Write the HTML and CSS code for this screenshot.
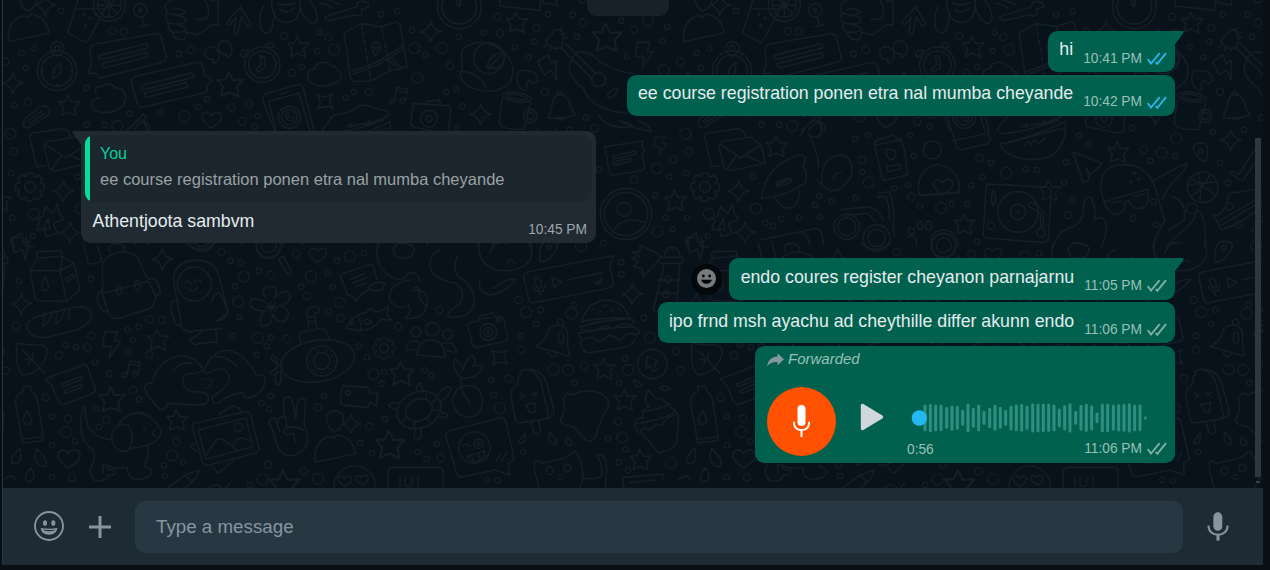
FILE: index.html
```html
<!DOCTYPE html>
<html lang="en">
<head>
<meta charset="utf-8">
<title>Chat</title>
<link rel="stylesheet" href="styles.css">
</head>
<body>
<svg class="defs" width="0" height="0">
  <defs>
    <symbol id="tail" viewBox="0 0 9 14"><path d="M0 0H7.2Q9.4 .3 8.2 2.2L0 13.2z" fill="currentColor"/></symbol>
    <symbol id="ticks" viewBox="0 0 60 38"><path d="M2 21l10 13L38 3M26 30l5 5L57 3" fill="none" stroke="currentColor" stroke-width="5.6"/></symbol>
    <symbol id="mic" viewBox="0 0 64 88"><rect x="18" y="1" width="27" height="56" rx="13.5" fill="currentColor"/><path d="M3 41C3 58 15 69 32 69s29-11 29-28" fill="none" stroke="currentColor" stroke-width="6"/><path d="M32 69v18" stroke="currentColor" stroke-width="9"/></symbol>
    <path id="star" d="M-5-32L6-11 31-12 15 6 20 30-3 19-24 29-19 5-33-12-13-12z"/>
    <path id="spark" d="M1-32Q5-5 32-1 6 5-1 32-5 5-32 0-5-5 1-32z"/>
    <path id="heart" d="M-4 26C-20 12-34 0-29-13-22-26-6-21-2-11 5-24 25-25 28-10 30 7 12 17-4 26z"/>
    <path id="bolt" d="M-20-38H18L10-10H28L-6 40 0 6H-26z"/>
    <path id="gear" d="M-9-42H9L13-29 25-36 38-23 31-11 43-8V9L30 13 36 26 23 38 11 31 8 42H-9L-13 30-26 36-38 23-31 11-43 8V-9L-30-13-36-25-23-38-12-31z"/>
    <g id="note"><path d="M-14 20L-6-22 26-18 18 16M-7-12L24-8"/><circle cx="-21" cy="20" r="7"/><circle cx="11" cy="17" r="7"/></g>
    <g id="person"><path d="M-60 50Q-65-5-28-24-10-32-2-22 5-38 18-30 55-20 61 24L-60 50zM-26-86Q-20-105 0-105 28-102 26-75 15-45-3-42-25-52-26-86z"/></g>
    <g id="bottle"><path d="M-38-62Q-34-86-15-90V-106H8L12-90Q26-80 30-58L45 42Q48 57 36 58L-16 64zM-16 52L42 46"/><path d="M-2-32Q-22-5-9 6 10 12 12-8z"/></g>
    <path id="ringS" d="M183 32h.1M65 159h.1M103 145h.1M78 203h.1M260 264h.1M42 315h.1M388 341h.1M480 338h.1M260 374h.1M313 374h.1M33 520h.1M37 654h.1M98 708h.1M536 161h.1M596 321h.1M773 348h.1M765 380h.1M621 297h.1M906 201h.1M952 153h.1M958 97h.1M1038 294h.1M1062 275h.1M1143 43h.1M1192 34h.1M1235 91h.1
      M1644 43h.1M1718 44h.1M1864 62h.1M1450 97h.1M1376 111h.1M1731 110h.1M1602 126h.1M1544 142h.1M1585 172h.1M1275 165h.1M1338 275h.1M1369 267h.1M1387 319h.1M1370 384h.1M1758 353h.1M1880 169h.1M1988 123h.1M2002 80h.1M1798 509h.1M2008 530h.1M1966 586h.1M1996 653h.1M2017 687h.1M1810 729h.1
      M541 416h.1M578 405h.1M705 406h.1M717 467h.1M561 515h.1M698 555h.1M658 565h.1M542 593h.1M735 618h.1M830 611h.1M877 611h.1M906 725h.1M922 531h.1M889 556h.1M948 488h.1M1053 507h.1M1085 510h.1M1173 487h.1M1167 547h.1M1239 433h.1M1212 407h.1M1193 600h.1M1426 482h.1M1501 467h.1M1635 488h.1M1660 548h.1M1435 605h.1M1443 674h.1M1613 397h.1M1708 389h.1M1757 658h.1
      M233 530h.1M271 669h.1M319 656h.1M373 654h.1M436 651h.1M295 679h.1M433 589h.1M420 615h.1M470 604h.1"/>
    <path id="ringT" transform="translate(0 720)" d="M57 123h.1M273 116h.1M383 270h.1M416 261h.1M399 301h.1M383 337h.1M196 315h.1M228 322h.1M286 367h.1M328 401h.1M417 479h.1M288 507h.1M297 561h.1M155 529h.1M156 616h.1M155 712h.1M225 604h.1M492 676h.1M550 666h.1M495 708h.1M697 287h.1M705 138h.1M718 232h.1M776 92h.1M722 69h.1M692 62h.1M800 319h.1M769 344h.1M813 293h.1M812 469h.1M785 490h.1M808 507h.1M972 469h.1M903 140h.1M983 99h.1M1012 62h.1M1092 40h.1M985 213h.1M998 142h.1M1077 319h.1M1101 352h.1M1152 396h.1M1145 431h.1M1155 537h.1M1080 608h.1M1115 640h.1M750 735h.1
      M1864 67h.1M1865 103h.1M1722 194h.1M1622 209h.1M1608 252h.1M1562 287h.1M1931 233h.1M1474 420h.1M1273 391h.1M1294 407h.1M1481 464h.1M1723 429h.1M1857 429h.1M1874 356h.1M1824 595h.1M1878 628h.1M1856 667h.1M1883 691h.1M1569 637h.1M1253 636h.1M1279 657h.1M1310 613h.1M1462 720h.1M1493 721h.1M1810 9h.1"/>
    <path id="ringM" d="M338 93h.1M371 95h.1M572 149h.1M852 108h.1M875 219h.1M747 312h.1M694 322h.1M727 364h.1M1107 276h.1M85 305h.1M41 455h.1M16 185h.1M985 111h.1M1748 68h.1M1492 51h.1M1609 83h.1M1500 100h.1M1349 197h.1M1635 275h.1M1901 89h.1M1784 385h.1M1903 539h.1M2020 478h.1
      M561 480h.1M709 590h.1M913 475h.1M1180 645h.1M1406 450h.1M948 677h.1M1663 619h.1M1691 673h.1M1745 690h.1
      M48 978h.1M17 1112h.1M137 1192h.1M399 1170h.1M319 1259h.1M204 1256h.1M216 1432h.1M177 1066h.1M274 1008h.1M261 1042h.1M448 1064h.1M664 756h.1M889 762h.1M812 825h.1M1195 980h.1M1022 955h.1M921 888h.1M860 1017h.1M530 1325h.1M804 1394h.1M911 1414h.1M1108 1280h.1M954 1223h.1M447 958h.1M485 960h.1
      M1556 900h.1M1318 931h.1M1526 1136h.1M1564 1049h.1M1753 1098h.1M1854 1264h.1M1322 1374h.1M2028 1053h.1"/>
    <path id="ringL" d="M553 350h.1M352 378h.1M1002 149h.1M31 401h.1M101 642h.1M1243 145h.1M1252 232h.1M1326 144h.1M1991 210h.1M2057 401h.1M1970 505h.1M1972 694h.1M1944 62h.1M581 547h.1M798 624h.1M994 519h.1M1460 459h.1M1504 416h.1M1550 625h.1M242 626h.1
      M731 830h.1M715 904h.1M933 830h.1M773 1014h.1M198 1296h.1M517 1367h.1M954 1437h.1M788 1438h.1M1120 1123h.1M1018 908h.1M1049 770h.1M1743 738h.1M1714 941h.1M1661 1108h.1M1884 1110h.1M1499 1225h.1M1578 937h.1M1950 1013h.1M1704 1110h.1M1867 1312h.1M2013 1389h.1"/>
    <g id="doodles">
      <g class="ring-out"><use href="#ringS" stroke-width="20"/><use href="#ringT" stroke-width="20"/><use href="#ringM" stroke-width="26"/><use href="#ringL" stroke-width="37"/></g>
      <g class="ring-in"><use href="#ringS" stroke-width="12"/><use href="#ringT" stroke-width="12"/><use href="#ringM" stroke-width="18"/><use href="#ringL" stroke-width="29"/></g>
      <g class="line">
        <!-- stars -->
        <use href="#star" x="896" y="141"/><use href="#star" x="209" y="317"/><use href="#star" transform="translate(692 254) scale(1.2)"/><use href="#star" x="1552" y="68"/><use href="#star" transform="translate(1823 113) scale(1.35)"/><use href="#star" x="2028" y="603"/><use href="#star" x="307" y="440"/><use href="#star" x="1331" y="457"/><use href="#star" x="1125" y="572"/><use href="#star" x="870" y="673"/><use href="#star" x="476" y="1020"/><use href="#star" transform="translate(337 1199) scale(1.2)"/><use href="#star" x="533" y="1261"/><use href="#star" transform="translate(1207 1121) scale(1.15)"/><use href="#star" transform="translate(1172 1335) scale(1.35)"/><use href="#star" x="1815" y="1107"/><use href="#star" x="1877" y="1200"/><use href="#star" x="1924" y="1380"/><use href="#star" transform="translate(855 1455) scale(1.4)"/>
        <!-- sparkles -->
        <use href="#spark" x="38" y="250"/><use href="#spark" x="190" y="573"/><use href="#spark" x="210" y="698"/><use href="#spark" transform="translate(975 305) rotate(42)"/><use href="#spark" x="1292" y="95"/><use href="#spark" x="1442" y="343"/><use href="#spark" x="1667" y="421"/><use href="#spark" x="487" y="778"/><use href="#spark" x="64" y="912"/><use href="#spark" x="1897" y="883"/><use href="#spark" transform="translate(1499 1072) rotate(42)"/><use href="#spark" transform="translate(1053 1272) scale(.9)"/><use href="#spark" transform="translate(135 15)"/>
        <!-- hearts, bolts, gears, notes -->
        <use href="#heart" x="636" y="358"/><use href="#heart" transform="translate(954 764) scale(.9)"/><use href="#heart" transform="translate(208 1374) scale(1.15)"/><use href="#heart" x="805" y="560"/><use href="#heart" transform="translate(619 1150) scale(.65)"/>
        <use href="#bolt" transform="translate(1651 205) rotate(-35)"/><use href="#bolt" x="1932" y="165"/><use href="#bolt" transform="translate(1980 438) scale(.7)"/><use href="#bolt" x="334" y="1033"/><use href="#bolt" transform="translate(65 742) rotate(-25)"/>
        <use href="#gear" x="90" y="561"/><circle cx="90" cy="561" r="16"/><use href="#gear" transform="translate(1152 1045) scale(.75)"/><circle cx="1152" cy="1045" r="13"/>
        <use href="#note" x="1197" y="285"/><use href="#note" x="395" y="1105"/>
        <!-- people, drink, fist -->
        <use href="#person" x="86" y="75"/><use href="#person" x="1005" y="1337"/>
        <path d="M235-5L203 98 254 127Q262 128 266 120L331-5M228 27H316"/><circle cx="328" cy="16" r="48"/><circle cx="328" cy="16" r="36"/><path d="M328-18V50M294 16H362M304-8L352 40M352-8L304 40"/><circle cx="251" cy="43" r="3"/><circle cx="270" cy="54" r="3"/><circle cx="257" cy="77" r="3"/><circle cx="288" cy="43" r="3"/>
        <circle cx="421" cy="31" r="20"/><circle cx="421" cy="31" r="5"/><path d="M426 51L434 78M418 81L448 74"/>
        <path d="M515 0Q485 12 502 38 492 58 506 69 499 88 516 96 521 118 545 120 562 116 557 96L590 105Q620 90 629 77L655 74V5L632 0M502 38Q540 52 556 36 540 20 515 30M506 69Q540 76 558 66 557 50 536 47M516 96Q550 100 558 88 550 75 530 73M587 58Q615 60 625 48 628 20 615 0"/>
        <path d="M681 66L721 20 752 70Q750 82 740 77L724 50 714 98Q706 110 702 98L708 52 692 72Q682 78 681 66z"/>
        <path d="M790 20Q775 40 782 85 798 110 814 90L825 40M815 0Q815 70 865 67 905 60 900 0M900 20Q910 60 938 71 960 65 945 25L930 0M838 28Q860 45 884 24M832 10Q858 20 885 8"/>
        <path d="M975 50L1070 20Q1070-4 1100 8 1118 20 1085 28 1090 55 1065 45L990 61Q975 63 975 50zM960 10Q980 10 1000 25M985 0L1025 15"/>
        <!-- compass, speech bubbles, quotes, clock -->
        <circle cx="171" cy="212" r="59"/><circle cx="171" cy="212" r="47"/><circle cx="172" cy="145" r="20"/><circle cx="172" cy="145" r="8"/><path d="M184 188L180 220 158 237 162 205zM171 172V165M211 212H218M171 252V258M130 212H124"/>
        <path d="M285 132L465 101Q481 100 485 115L499 170Q500 183 488 186L300 235 287 220 264 220 275 190 270 150Q272 135 285 132z"/><rect x="295" y="148" width="150" height="14" rx="7" transform="rotate(-14 370 155)"/><rect x="305" y="174" width="140" height="14" rx="7" transform="rotate(-14 375 181)"/>
        <path d="M410 228L592 187Q602 186 607 198L615 226 636 243 621 254 622 268Q622 276 612 278L430 322Q418 324 413 312L394 250Q392 234 410 228z"/><rect x="422" y="237" width="162" height="14" rx="7" transform="rotate(-14 503 244)"/><rect x="432" y="263" width="132" height="14" rx="7" transform="rotate(-14 498 270)"/>
        <path d="M640 178C605 180 607 138 635 140 665 145 665 185 638 190zM680 164C645 164 650 120 675 122 705 125 700 170 680 173z"/>
        <circle cx="787" cy="194" r="53"/><circle cx="787" cy="194" r="41"/><path d="M781 166L793 171 796 202 775 216 768 209 785 194zM722 166Q722 145 745 151L730 172zM798 134Q815 121 823 140L808 143z"/>
        <!-- cloud, map, blobs, phone, envelope -->
        <path d="M924 234Q920 205 944 207C950 182 985 182 992 197Q1010 198 1011 211C1030 215 1028 240 1008 247Q965 268 935 250 925 245 924 234z"/>
        <path d="M1032 100L1082 71 1144 80 1190 65 1200 74 1221 200 1165 214 1113 243 1060 244 1052 236zM1056 214Q1140 190 1210 135M1057 223Q1150 195 1209 145M1160 175L1200 210M1168 170L1207 205M1126 168Q1105 130 1130 128 1155 132 1126 168z"/><circle cx="1129" cy="144" r="4"/><path d="M1084 73L1112 240M1145 82L1170 212" stroke-dasharray="14 10"/>
        <path d="M290 285C278 265 292 257 306 260 318 247 338 250 343 263 370 263 377 280 377 295 375 325 340 338 315 338 285 338 270 322 274 308Q278 298 300 292"/>
        <path d="M73 358L118 322Q140 310 149 330 148 345 136 352L87 383Q70 384 70 370zM84 363L125 334M90 371L132 342"/>
        <path d="M825 393L788 300Q788 286 800 280L890 255Q905 252 910 265L942 393M930 393L897 280 806 304 829 393M840 283L860 277"/><circle cx="868" cy="352" r="33"/><circle cx="868" cy="352" r="23"/><path d="M857 342Q858 366 880 363L882 355 872 352 866 348 864 338z"/>
        <path d="M832 400L845 438Q850 452 865 448L935 432Q947 427 945 415L938 393M833 423L935 400"/>
        <path d="M135 498L110 500 90 415Q88 402 100 399L190 386 204 392 213 412M148 424L230 411 260 440 270 490 165 512Q150 510 147 500L132 440Q131 427 148 424zM137 434L197 474 257 435M155 508L185 466M210 466L262 490"/>
        <path d="M380 392L430 343 437 350 430 360Q455 375 450 392M400 392Q410 375 430 365 440 385 438 392"/>
        <path d="M965 392L1000 345Q1050 340 1070 322 1085 310 1110 320L1165 335Q1170 348 1150 355L1095 375 1110 362M975 402Q1060 395 1150 360M1038 380L1055 372 1052 382 1070 374 1098 370M975 432Q1065 415 1170 365 1180 430 1125 470 1040 495 985 450zM990 430Q1090 405 1162 385M1050 435L1060 422 1068 432 1080 418 1090 430 1110 415"/>
        <path d="M1240 310L1232 365Q1230 378 1245 382L1325 399Q1342 400 1346 390L1352 326Q1352 316 1335 317L1240 310"/>
        <!-- stopwatch, rose, guitar, mug, bell -->
        <circle cx="1378" cy="20" r="66"/><circle cx="1378" cy="20" r="52"/><path d="M1370 0Q1372 24 1380 18L1380 0M1500 0V18L1620 31 1622 0M1630 0V9L1670 15V0M1735 0L1742 10 1775 0"/>
        <path d="M1390 145Q1450 105 1510 155 1555 200 1530 245 1490 290 1420 265 1380 250 1380 215 1440 215 1458 265M1388 210Q1380 160 1390 145M1460 200Q1470 160 1510 158 1520 190 1490 205L1462 205 1505 165"/><circle cx="1467" cy="175" r="46"/>
        <path d="M1550 235Q1550 205 1580 212 1610 212 1614 240L1600 252 1588 240 1578 252Q1586 270 1572 272 1550 260 1550 235z"/>
        <path d="M1638 123L1665 90Q1690 82 1690 118L1685 142Q1655 155 1638 123zM1682 142L1775 235M1695 130L1787 220M1707 210Q1715 160 1740 155 1780 160 1800 185 1860 220 1900 220M1707 210Q1710 235 1750 265 1770 330 1880 340M1830 295Q1815 290 1828 278L1845 265Q1860 268 1845 284zM1795 345Q1820 390 1900 380L1860 362Q1890 370 1910 385L1955 395Q1940 365 1915 365"/><circle cx="1796" cy="239" r="21"/><path d="M1676 92l12-8M1684 104l14-6M1688 116l14-2M1642 130l-10 12M1654 138l-4 14M1668 144v10"/>
        <path d="M1507 298L1497 370Q1510 392 1572 388L1591 310"/><ellipse cx="1550" cy="291" rx="44" ry="14" transform="rotate(8 1550 291)"/><ellipse cx="1550" cy="291" rx="32" ry="7" transform="rotate(8 1550 291)"/><circle cx="1590" cy="348" r="20"/><circle cx="1590" cy="348" r="11"/>
        <path d="M1645 355L1658 310Q1660 285 1682 284 1710 290 1710 318L1726 345 1700 352zM1670 282Q1680 265 1688 283M1672 355Q1685 365 1697 354"/>
        <path d="M1277 318L1282 303 1318 300 1322 313"/><circle cx="1287" cy="356" r="25"/><circle cx="1287" cy="356" r="9"/>
        <!-- ticket, profile -->
        <path d="M1815 440L1930 422Q1922 440 1934 450L1926 462 1934 500Q1935 510 1920 512L1842 525Q1830 527 1828 515z"/><rect x="1838" y="460" width="70" height="10" rx="5" transform="rotate(-12 1873 465)"/><rect x="1838" y="480" width="56" height="10" rx="5" transform="rotate(-12 1866 485)"/>
        <circle cx="1878" cy="642" r="77"/><circle cx="1878" cy="642" r="65"/><circle cx="1872" cy="628" r="21"/><path d="M1840 692Q1870 645 1930 667"/>
        <path d="M136 620L158 640 172 612 178 640Q190 650 188 660L160 670 172 700 140 710 133 690 110 690 120 660 105 655 128 650zM145 655L150 690 130 685zM60 712L38 717 42 738M80 712L76 738 100 742"/>
        <!-- saxophone, trumpet, sunglasses, headphones -->
        <path d="M378 405Q395 370 420 360 450 375 440 400 420 420 403 405 433 470 430 500M258 595Q275 490 375 465 400 465 385 500 400 520 390 550 330 590 258 595zM300 590Q310 620 340 625 370 625 375 570M306 555L345 538"/><rect x="303" y="540" width="48" height="14" rx="7" transform="rotate(-18 327 547)"/><path d="M440 550Q435 470 500 465 540 475 528 530 500 580 460 570L425 540M475 535Q480 515 500 518"/>
        <path d="M255 720L425 685Q438 688 443 715L446 735M375 695Q400 700 405 735"/>
        <path d="M605 420L655 406 675 420Q690 430 697 525L630 541Q622 541 620 530L598 430zM600 436L680 418M633 462Q630 440 650 450 665 445 662 470 645 490 635 465zM635 500L675 493V508L638 515z"/>
        <circle cx="772" cy="450" r="27"/><path d="M732 585Q720 505 790 493 860 510 852 576zM745 586L852 578"/>
        <path d="M610 580L640 575Q660 595 655 690L660 710M605 590H630Q645 610 643 660M495 630L580 620Q610 625 625 660M515 647L570 640Q590 645 600 665"/><circle cx="515" cy="680" r="38"/><circle cx="515" cy="680" r="27"/><circle cx="605" cy="714" r="40"/><circle cx="605" cy="714" r="26"/>
        <path d="M700 690Q705 675 718 690 722 700 708 705zM728 665Q740 655 745 680 735 700 727 680zM755 665Q770 655 770 685 760 698 752 685zM700 710Q725 700 725 738M770 740Q760 690 810 690 845 695 850 740"/><circle cx="806" cy="736" r="36"/><circle cx="806" cy="736" r="22"/>
        <!-- turntable, paper plane, skull, ball, shoe -->
        <path d="M945 552L1115 562Q1128 564 1128 580L1120 720 1105 728 935 714Q923 712 925 695L933 565Q934 552 945 552zM955 570Q945 590 953 617 970 600 955 570z"/><circle cx="1029" cy="636" r="61"/><circle cx="1029" cy="636" r="23"/><circle cx="1029" cy="636" r="3"/><circle cx="1098" cy="698" r="13"/><path d="M1097 684V640L1070 625Q1055 615 1065 608 1080 605 1105 635V684"/>
        <path d="M1193 456L1282 490 1245 525 1235 505 1243 540 1225 548z"/>
        <path d="M1292 620Q1250 510 1330 495 1410 485 1440 560 1455 620 1470 660 1450 690 1432 740M1288 605L1418 568 1420 600Q1410 630 1385 625 1365 620 1362 600L1350 605Q1350 640 1325 643 1300 640 1288 605zM1310 610L1338 603M1375 590L1403 583M1370 650Q1385 640 1382 660 1370 670 1365 660z"/><circle cx="1378" cy="520" r="4"/><circle cx="1390" cy="538" r="4"/><circle cx="1368" cy="545" r="4"/>
        <path d="M1430 545Q1500 505 1533 490 1545 495 1500 540 1480 560 1460 600M1490 590Q1535 600 1528 660L1480 690M1135 740Q1145 700 1180 685 1230 670 1225 620 1230 580 1250 595 1265 630 1258 660 1290 640 1295 680 1290 720 1280 740M1475 735Q1510 710 1555 660 1570 620 1580 640 1598 700 1588 740"/>
        <path d="M1580 482Q1550 455 1555 440 1565 425 1590 430 1605 445 1593 482z"/><circle cx="1576" cy="455" r="7"/><circle cx="1583" cy="562" r="46"/><path d="M1548 535Q1590 560 1620 585M1570 518Q1580 560 1575 606M1605 525Q1585 560 1548 592M1540 555Q1580 550 1625 545"/>
        <path d="M1665 520Q1672 505 1690 525L1745 440 1755 465 1705 540Q1695 540 1665 520zM1615 645Q1650 650 1662 580L1700 575 1760 565M1615 645L1640 690Q1700 670 1760 620M1630 665L1760 590M1640 675L1760 603"/>
        <!-- carton, backpack, bread, penguin -->
        <path d="M110 765Q110 755 120 755L185 753V768L113 775zM113 775L90 812 105 895Q110 903 125 903L200 904 240 870 222 790 187 770M90 812H180L187 770M180 812L200 904M180 812L222 790M197 835L220 822 222 832 200 845zM135 830Q115 865 135 872 155 868 135 830z"/>
        <path d="M308 850L307 800Q315 758 370 756 410 758 418 785L467 890Q468 910 450 925L355 956Q330 956 325 940L307 880zM316 878L440 845M307 872Q285 880 295 910 305 940 320 935M445 838Q460 830 472 845L482 875Q475 888 466 885M250 730L265 790Q280 795 305 784L290 725M330 755Q320 732 350 730 380 735 372 755"/><ellipse cx="357" cy="871" rx="8" ry="14"/><ellipse cx="412" cy="856" rx="8" ry="14"/>
        <path d="M80 980Q80 960 125 945L210 925Q270 910 275 945 275 970 230 990L140 1012Q90 1018 80 980zM125 950Q135 930 135 945L128 980Q145 970 160 935M170 940L168 972Q185 965 195 925M208 925L205 962"/>
        <path d="M523 855Q512 790 580 781 640 775 657 830L682 925Q685 960 650 962L675 945M523 855L545 980Q555 1000 580 993L665 985M530 900Q505 900 517 945 530 990 543 972M635 905Q640 875 660 880L682 925M605 995L570 1020Q580 1040 600 1030L650 1025 647 988"/><circle cx="583" cy="852" r="51"/><path d="M552 850Q562 835 573 852M582 848Q593 832 604 846M565 867Q580 880 593 862"/>
        <circle cx="805" cy="738" r="37"/><path d="M835 777L860 818Q870 828 875 815L850 770zM560 730Q600 765 645 730"/>
        <!-- flower, note bubble, fish, octopus -->
        <path d="M798 895C765 850 850 845 823 893 870 845 895 905 838 917 895 930 850 1000 818 942 815 1000 755 985 793 932 740 940 730 875 793 905M812 905V938M795 921H832M800 910L826 933M826 910L800 933"/>
        <path d="M1025 822L1110 793Q1122 790 1130 840M1020 825L1042 885 1060 890 1068 903 1080 885 1105 870M1105 865Q1120 840 1155 850L1145 872 1115 870zM1053 838L1095 820M1058 850L1102 832M1065 860L1100 848"/>
        <path d="M1038 985Q1055 945 1100 937L1110 925 1130 935 1150 930 1165 920 1162 945 1175 960 1145 958Q1110 1005 1038 985zM1072 948Q1090 970 1080 995M1090 963Q1100 950 1115 965 1105 975 1095 970"/><circle cx="1055" cy="970" r="4"/>
        <path d="M1133 730Q1120 800 1180 835 1210 845 1225 820 1250 810 1260 840M1180 745Q1195 715 1240 740 1250 775 1200 775 1180 770 1180 745M1230 840Q1165 850 1168 900 1200 935 1225 915 1240 935 1215 955 1270 960 1280 920L1255 890Q1270 860 1240 862M1290 800Q1290 760 1320 750M1290 800Q1300 840 1370 850 1400 880 1380 910 1335 940 1345 950 1400 960 1420 920 1430 870 1390 840 1350 820 1372 770M1240 870Q1290 870 1280 915"/>
        <!-- submarine, hands, album, peace sign -->
        <ellipse cx="953" cy="1083" rx="112" ry="62" transform="rotate(-10 953 1083)"/><circle cx="965" cy="1083" r="45"/><circle cx="965" cy="1083" r="25"/><circle cx="965" cy="1083" r="35" stroke-dasharray="5 20"/><path d="M903 1030L897 1008Q900 995 920 993L965 985Q980 987 988 1018M927 985L920 935Q930 910 958 925L955 938 943 940 950 983M922 950H942M924 965H945M842 1100Q800 1070 818 1065 835 1070 830 1105 800 1120 820 1125 835 1120 832 1112 820 1145 832 1155 850 1150 840 1112"/>
        <path d="M455 1150Q470 1090 525 1070 580 1060 608 1105C605 1125 575 1118 560 1122 540 1132 545 1165 575 1175 600 1175 625 1175 625 1195 625 1220 600 1213 565 1214L503 1210Q500 1230 480 1228 440 1190 433 1165 440 1145 455 1150M522 1110Q545 1080 578 1092M612 1115Q630 1055 680 1050 740 1060 768 1125 800 1120 795 1150 780 1190 745 1193 725 1190 730 1178 690 1180 655 1210C635 1215 630 1195 645 1185 670 1170 690 1150 688 1130 680 1100 655 1104 640 1112Q620 1125 612 1115M630 1072Q675 1060 712 1100"/>
        <path d="M590 1268L735 1235Q748 1233 752 1245L777 1345Q777 1355 765 1360L622 1396Q610 1396 607 1385L577 1282Q577 1270 590 1268zM595 1290L738 1253 758 1340 618 1378zM618 1365L650 1320Q665 1310 685 1330L710 1350M700 1335Q715 1300 755 1325M655 1245L695 1218Q710 1215 725 1235M590 1325L570 1340 590 1355M635 1398L655 1420 700 1380"/><circle cx="715" cy="1281" r="13"/>
        <path d="M855 1255L850 1210Q850 1190 868 1190 880 1195 887 1255L893 1205Q900 1190 917 1200L912 1275Q930 1310 918 1340 900 1370 860 1367 830 1355 822 1300L808 1270Q808 1252 825 1254L840 1295M833 1265Q835 1245 858 1252L860 1285M850 1290Q875 1270 910 1290M850 1290Q850 1310 880 1300L886 1325"/>
        <!-- leaf, card, bottle, dog, drops -->
        <path d="M50 1030L100 1035Q150 1030 140 1065 120 1120 70 1125 45 1110 50 1030zM68 1050L135 1120M85 1095L92 1078M100 1060L98 1080 75 1078"/><path d="M135 1137L250 1094Q260 1093 263 1105L286 1165Q287 1175 278 1180L192 1213Q180 1214 175 1203L155 1155z"/><path d="M185 1152L240 1130Q250 1132 243 1140L190 1160zM192 1172L240 1153Q250 1155 243 1163L197 1180z"/>
        <use href="#bottle" x="84" y="1265"/>
        <path d="M60 1345Q25 1375 38 1390 70 1400 60 1345zM110 1346Q95 1390 130 1400 155 1390 110 1346zM92 1403Q65 1435 85 1445 115 1440 92 1403zM10 1440Q40 1415 45 1440"/>
        <path d="M256 1220Q240 1230 242 1280 245 1330 280 1350 290 1370 270 1410 275 1440 290 1443 320 1445 325 1425 350 1430 345 1410L325 1410 318 1393H308L310 1420M256 1220Q250 1310 333 1320M445 1340Q445 1375 432 1400 460 1405 455 1418 445 1440 410 1437 380 1435 383 1402 340 1410 320 1395M335 1310Q340 1270 385 1275 405 1310 390 1345 370 1365 350 1345 335 1330 335 1310M350 1280Q380 1235 420 1240 465 1250 483 1290 485 1335 395 1345M400 1242Q420 1228 452 1252"/><circle cx="433" cy="1287" r="3"/><path d="M465 1290L455 1303 470 1310"/>
        <path d="M505 1462L555 1425 598 1410 588 1435 550 1470M555 1425L575 1445M620 1470Q650 1440 670 1470L690 1450"/>
        <!-- video, turtle, group, camera -->
        <path d="M1035 1157L1100 1162Q1112 1164 1110 1180L1133 1180 1130 1218 1110 1206 1105 1222 1035 1216Q1020 1214 1022 1200L1026 1165Q1028 1157 1035 1157z"/><circle cx="1045" cy="1178" r="7"/>
        <ellipse cx="1257" cy="1230" rx="68" ry="54" transform="rotate(-25 1257 1230)"/><ellipse cx="1257" cy="1230" rx="42" ry="32" transform="rotate(-25 1257 1230)"/><path d="M1313 1185Q1340 1150 1354 1165 1350 1185 1325 1203M1323 1238Q1350 1240 1340 1252H1320M1245 1284L1243 1318Q1255 1325 1263 1312V1282M1250 1172Q1248 1150 1262 1150L1268 1172M1195 1230Q1165 1228 1167 1212 1185 1205 1200 1210M1280 1175L1278 1198M1310 1195L1294 1212M1318 1230L1296 1232M1290 1268L1280 1253M1240 1284L1246 1262M1205 1268L1222 1250"/>
        <circle cx="1064" cy="1460" r="62"/><path d="M1035 1460Q1005 1440 1018 1430 1028 1425 1034 1435 1050 1420 1055 1436 1055 1445 1035 1460zM1088 1455Q1060 1440 1068 1430 1078 1422 1084 1432 1100 1418 1105 1436 1102 1448 1088 1455zM1165 1470V1415Q1165 1402 1180 1402H1315Q1330 1402 1330 1420V1470M1200 1432V1460M1215 1432V1455Q1230 1465 1235 1455V1432M1255 1432V1460"/>
        <circle cx="1297" cy="988" r="20"/><circle cx="1248" cy="997" r="15"/><circle cx="1343" cy="1003" r="15"/><path d="M1250 1065Q1255 1020 1290 1020 1335 1020 1335 1072zM1244 1050L1218 1048Q1220 1015 1258 1025M1340 1052L1370 1058Q1365 1020 1330 1030"/>
        <path d="M1412 967L1435 963 1440 948 1478 938 1485 952 1500 950Q1510 950 1512 962L1523 1010Q1523 1022 1512 1025L1430 1042Q1420 1042 1417 1032L1404 980Q1404 970 1412 967zM1445 958L1470 952"/><circle cx="1465" cy="996" r="25"/><circle cx="1465" cy="996" r="13"/><circle cx="1465" cy="996" r="4"/><circle cx="1495" cy="961" r="5"/>
        <!-- radish, wink card, popsicle, cat -->
        <path d="M1385 1160Q1355 1180 1358 1210 1370 1250 1405 1252 1445 1250 1448 1200 1440 1150 1400 1158L1385 1160M1410 1208Q1380 1180 1383 1135M1385 1135Q1355 1110 1363 1075 1385 1090 1388 1110 1400 1070 1420 1066 1430 1090 1418 1100 1440 1090 1448 1100 1440 1135 1385 1135"/>
        <path d="M1350 1292L1500 1253Q1512 1252 1518 1265L1543 1378 1525 1390 1528 1425 1485 1410 1388 1430Q1375 1432 1370 1420L1338 1312Q1336 1296 1350 1292z"/><circle cx="1423" cy="1343" r="47"/><circle cx="1436" cy="1331" r="14"/><circle cx="1436" cy="1331" r="5"/><path d="M1388 1338Q1398 1325 1410 1340M1400 1370L1455 1352Q1450 1385 1430 1385 1410 1385 1400 1370zM1415 1368L1420 1382M1435 1362L1440 1378M1490 1382L1500 1365M1505 1382L1520 1358"/>
        <path d="M1350 1158Q1335 1160 1332 1185L1346 1260Q1350 1270 1365 1268L1430 1258Q1450 1255 1443 1235L1425 1155Q1410 1110 1378 1108 1355 1110 1362 1125 1350 1130 1355 1145zM1378 1108Q1425 1105 1440 1150L1462 1230Q1465 1250 1440 1257M1392 1266L1402 1298Q1415 1308 1422 1295L1415 1260M1358 1178L1372 1186 1360 1195M1410 1178L1395 1182 1410 1190M1375 1215L1408 1208M1380 1214Q1385 1245 1405 1235L1404 1212" transform="translate(200)"/>
        <path d="M1405 1420L1402 1390Q1410 1375 1425 1390L1495 1375 1525 1352Q1545 1380 1548 1420 1552 1450 1530 1475M1405 1420Q1415 1450 1420 1475M1470 1432Q1480 1445 1490 1432M1475 1425H1488M1590 1365Q1610 1395 1605 1425 1595 1440 1550 1435M1590 1365Q1620 1360 1620 1410L1615 1470" transform="translate(200)"/><circle cx="1649" cy="1412" r="11"/><circle cx="1702" cy="1404" r="11"/>
        <!-- voice card, bell, burger, lighthouse -->
        <path d="M1585 815L1840 767 1830 800 1840 850Q1838 862 1825 865L1600 908Q1588 908 1585 895L1571 830Q1572 818 1585 815zM1604 842Q1603 832 1612 834 1622 835 1625 860 1615 870 1610 860zM1600 860Q1605 880 1630 872L1635 855M1618 878L1622 888M1655 832L1685 845 1662 863zM1700 840L1810 817M1783 845L1790 853 1802 835M1795 853L1808 837"/>
        <path d="M1607 1040Q1640 1020 1645 990 1660 970 1690 978 1708 990 1702 1030L1708 1068zM1675 975Q1665 958 1685 957 1695 965 1688 977M1645 1058Q1655 1078 1668 1064"/><ellipse cx="1683" cy="1014" rx="8" ry="18"/>
        <path d="M1745 965Q1760 905 1820 900 1870 900 1888 955 1815 950 1745 965zM1740 980Q1800 960 1895 955 1910 965 1890 975L1870 970 1840 985 1815 978 1790 990 1745 990zM1735 1000Q1800 985 1900 980 1930 995 1910 1005L1885 1000 1860 1020 1830 1005 1800 1025 1775 1012 1745 1020zM1742 1025Q1745 1060 1770 1058L1880 1040Q1900 1035 1905 1015"/><path d="M1775 930l5-5M1798 938l6-6M1815 920l5-6M1835 930l5 6M1855 925l5 5M1805 915l3 3"/>
        <path d="M1970 935L1960 930 1993 790M2040 790L2028 935M1980 772H2045Q2055 785 2045 790H1980Q1970 780 1980 772zM1993 770Q1995 745 2012 743 2040 742 2040 770M1975 840H2035M1970 880H2032M1920 735L1970 760 1985 770 1930 830 1925 805 1900 800 1915 785 1895 775 1920 770 1895 755 1920 755z"/><circle cx="2005" cy="838" r="10"/><circle cx="1998" cy="883" r="10"/>
        <path d="M1440 720Q1425 790 1490 810 1560 820 1590 780 1600 750 1590 725M1470 760Q1480 720 1520 730M1520 790Q1530 770 1545 790M1440 840Q1430 880 1475 885 1520 875 1545 840 1530 830 1480 865M1620 785Q1615 740 1635 725 1680 720 1670 745 1650 780 1632 785z"/><circle cx="1647" cy="743" r="7"/>
        <!-- cursor, cupcake, splash -->
        <circle cx="1957" cy="1092" r="44"/><path d="M1942 1067L1975 1085 1962 1092 1970 1110 1960 1115 1950 1097 1938 1107z"/>
        <path d="M1915 1300L1905 1280Q1900 1250 1930 1255 1920 1225 1950 1220 1925 1205 1945 1170 1965 1195 1970 1195 2000 1200 2015 1225 2040 1235 2035 1260L2030 1330Q2000 1360 1975 1358L1920 1292 1935 1285 1950 1290 1965 1275 1985 1275 2000 1255 2035 1240M1930 1235Q1990 1225 2010 1210M1910 1270Q1990 1260 2025 1235"/>
        <path d="M1700 1180L1720 1185Q1740 1170 1780 1173 1830 1185 1825 1220 1800 1260 1790 1300 1780 1330 1760 1322L1720 1280Q1680 1275 1682 1260 1700 1225 1690 1195z"/>
        <path d="M1575 1300Q1545 1335 1560 1330 1580 1330 1575 1300zM1650 1297Q1640 1330 1665 1335 1680 1325 1650 1297zM1700 1310Q1690 1335 1710 1337 1725 1330 1700 1310zM1900 1142Q1910 1135 1925 1158 1905 1165 1900 1142zM1980 1165Q2000 1150 2010 1168 1995 1178 1980 1165z"/>
        <path d="M1870 1470V1432L1990 1422 1985 1440M1890 1448L1965 1440"/>
      </g>
    </g>
  </defs>
</svg>
<div class="app">
  <main class="chat">
    <svg class="wallpaper" viewBox="9 0 3780 1464" preserveAspectRatio="none">
      <use href="#doodles" x="-2025"/><use href="#doodles"/><use href="#doodles" x="2025"/>
    </svg>
    <div class="date-chip"></div>
    <div class="messages">
      <div class="bubble out first"><svg class="tail"><use href="#tail"/></svg><span class="text">hi</span><span class="meta">10:41 PM<svg class="ticks read"><use href="#ticks"/></svg></span></div>
      <div class="bubble out"><span class="text">ee course registration ponen etra nal mumba cheyande</span><span class="meta raised">10:42 PM<svg class="ticks read low"><use href="#ticks"/></svg></span></div>
      <div class="bubble in">
        <svg class="tail"><use href="#tail"/></svg>
        <div class="quote"><div class="quote-name">You</div><div class="quote-text">ee course registration ponen etra nal mumba cheyande</div></div>
        <div class="reply"><span class="text">Athentjoota sambvm</span><span class="meta">10:45 PM</span></div>
      </div>
      <div class="row">
        <div class="react"><svg viewBox="0 0 20 20" width="19" height="19"><circle cx="10" cy="10" r="10" fill="#787b7e"/><circle cx="6.7" cy="7.4" r="1.5"/><circle cx="13.3" cy="7.4" r="1.5"/><path d="M4.3 11.2h11.4q-1.3 4.3-5.7 4.3t-5.7-4.3"/></svg></div>
        <div class="bubble out late"><svg class="tail"><use href="#tail"/></svg><span class="text">endo coures register cheyanon parnajarnu</span><span class="meta">11:05 PM<svg class="ticks"><use href="#ticks"/></svg></span></div>
      </div>
      <div class="bubble out next"><span class="text">ipo frnd msh ayachu ad cheythille differ akunn endo</span><span class="meta">11:06 PM<svg class="ticks"><use href="#ticks"/></svg></span></div>
      <div class="bubble voice">
        <div class="forwarded"><svg viewBox="0 0 50 40" width="17" height="14"><path d="M0 39C4 20 14 10 31 10V0L50 18 31 36V26Q11 24 0 39z" fill="#8696a0"/></svg>Forwarded</div>
        <div class="player">
          <div class="avatar"><svg viewBox="0 0 50 96" width="17" height="32"><rect x="13" y="0" width="24" height="63" rx="12" fill="currentColor"/><path d="M2 50C2 66 11 75 25 75s23-9 23-25" fill="none" stroke="currentColor" stroke-width="5.5"/><path d="M25 75v21" stroke="currentColor" stroke-width="6"/></svg></div>
          <svg class="play" viewBox="0 0 24 28"><path d="M2.5 2.5v23L21.5 14z" fill="#d0d8dc" stroke="#d0d8dc" stroke-width="3.4" stroke-linejoin="round"/></svg>
          <div class="track">
            <svg class="wave" viewBox="-18 0 690 90"><path d="M0 9v71M16 7v76M32 9v71M48 9v71M65 16v57M81 11v68M97 13v63M113 25v39M129 6v77M145 19v51M161 9v71M177 28v33M194 18v53M210 10v69M226 16v57M242 25v39M258 12v66M274 9v71M290 7v75M306 13v63M323 5v79M339 6v77M355 6v77M371 7v75M387 9v71M403 21v47M419 11v67M435 5v79M452 28v33M468 10v69M484 7v75M500 11v67M516 33v23M532 6v77M548 6v77M565 10v69M581 8v73M597 7v75M613 5v79M629 9v71M645 9v71M661 45h.1" stroke="#2d8f7f" stroke-width="9" stroke-linecap="round"/><circle cx="-17" cy="45" r="23" fill="#22b8f0"/></svg>
            <div class="track-info"><span>0:56</span><span class="stamp">11:06 PM<svg class="ticks"><use href="#ticks"/></svg></span></div>
          </div>
        </div>
      </div>
    </div>
    <div class="scroll-thumb"></div>
    <div class="scroll-end"></div>
  </main>
  <footer class="composer">
    <svg class="smile" viewBox="0 0 90 90"><circle cx="45" cy="45" r="42" fill="none" stroke="currentColor" stroke-width="5.5"/><ellipse cx="33" cy="36" rx="6" ry="8.5"/><ellipse cx="58" cy="36" rx="6" ry="8.5"/><path d="M20 51q25 5 50 0-2 20-25 20T20 51z"/><path d="M27 55.5q18 3 36 0-3 5-18 5t-18-5" fill="#1f2b34"/></svg>
    <svg class="plus" viewBox="0 0 22 22"><path d="M11 0v22M0 11h22" stroke="currentColor" stroke-width="3"/></svg>
    <div class="field">Type a message</div>
    <svg class="mic"><use href="#mic"/></svg>
  </footer>
</div>
</body>
</html>
```
FILE: styles.css
```css
* { box-sizing: border-box; }
body { margin: 0; background: #090f12; font-family: "Liberation Sans", Arial, sans-serif; }
svg { display: block; flex: none; }
.defs { position: absolute; }
.app { width: 1261px; height: 565px; margin-left: 2px; border-left: 1px solid #29343b; display: flex; flex-direction: column; }
.chat { position: relative; height: 488px; background: #08121a; overflow: hidden; }
.wallpaper { position: absolute; left: 0; top: 0; width: 1260px; height: 488px; }
.ring-out { fill: none; stroke: #141e26; stroke-linecap: round; }
.ring-in { fill: none; stroke: #08121a; stroke-linecap: round; }
.line { fill: none; stroke: #141e26; stroke-width: 4.8; stroke-linecap: round; stroke-linejoin: round; }
.date-chip { position: absolute; left: 584px; top: -14px; width: 82px; height: 30px; border-radius: 9px; background: #172129; }
.messages { position: relative; display: flex; flex-direction: column; align-items: flex-end; padding: 31px 88px 0 78px; }
.bubble { position: relative; border-radius: 9.4px; color: #e6ecee; }
.out { display: flex; height: 41px; margin-bottom: 3px; padding: 7px 8px 0 11px; background: #00614e; }
.out .text { margin-right: 10px; }
.text { font-size: 17.75px; line-height: 22px; white-space: nowrap; }
.meta { display: flex; height: 16px; margin-top: 13px; font-size: 13.75px; line-height: 16px; color: #99c0b8; white-space: nowrap; }
.meta.raised { margin-top: 12px; }
.ticks { width: 20px; height: 13px; margin: 1px 0 0 5px; color: #80b0a6; }
.ticks.read { color: #2fb5ea; }
.ticks.low { margin-top: 2px; }
.tail { position: absolute; top: 0; right: -9px; width: 9px; height: 14px; color: #00614e; }
.first, .late { border-top-right-radius: 0; }
.in { align-self: flex-start; width: 515px; height: 112px; margin: 12px 0 15px; padding: 4px 4px 0; background: #1f2a33; border-top-left-radius: 0; }
.in .tail { left: -9px; color: #1f2a33; transform: scaleX(-1); }
.quote { height: 67px; border-radius: 9px; background: linear-gradient(90deg, #06dc9c 5px, #1b262e 5px); padding: 9px 0 0 15px; }
.quote-name { height: 26px; font-size: 16px; line-height: 19px; color: #06cf9c; }
.quote-text { font-size: 16.5px; line-height: 19px; color: #9ca1a4; white-space: nowrap; }
.reply { display: flex; justify-content: space-between; padding: 8px 5px 0 7.6px; }
.reply .meta { margin-top: 12px; color: #9fa6aa; }
.row { display: flex; align-items: center; gap: 7px; margin-bottom: 2px; }
.late { height: 42px; margin: 0; padding-top: 8px; padding-left: 12px; }
.next { height: 41px; padding-top: 8px; }
.late .meta, .next .meta { margin-top: 12px; }
.react { display: flex; align-items: center; justify-content: center; width: 31px; height: 31px; border-radius: 50%; background: #04080b; }
.react svg { margin-top: -1px; }
.voice { width: 420px; height: 117px; padding: 3px 8px 0 12px; background: #00614e; }
.forwarded { display: flex; align-items: center; gap: 4px; height: 18px; font-size: 15px; font-style: italic; color: #99c0b8; }
.forwarded svg { margin-top: 4px; }
.player { display: flex; margin-top: 20px; }
.avatar { display: flex; justify-content: center; width: 69px; height: 69px; padding-top: 18px; border-radius: 50%; background: #ff5100; color: #fff; }
.play { width: 24px; height: 28px; margin: 16px 0 0 24px; }
.track { flex: 1; padding-top: 16px; }
.wave { width: 230px; height: 30px; margin-left: 34.7px; overflow: visible; }
.track-info { display: flex; justify-content: space-between; margin: 8px 0 0 23px; font-size: 13.75px; line-height: 18px; color: #99c0b8; }
.stamp { display: flex; line-height: 16px; }
.scroll-thumb { position: absolute; left: 1252px; top: 138px; width: 6px; height: 339px; background: #2f363c; }
.scroll-end { position: absolute; left: 1253px; top: 481px; width: 4px; height: 2px; background: #384047; }
.composer { display: flex; align-items: center; height: 77px; padding-left: 31px; background: #1f2b34; color: #8696a0; }
.smile { width: 30px; height: 30px; margin-bottom: 1px; fill: currentColor; }
.plus { width: 22px; height: 22px; margin: 1px 24px 0 25px; }
.field { width: 1048px; height: 52px; padding-left: 21px; border-radius: 10px; background: #283842; font-size: 18.75px; line-height: 51px; color: #8696a0; }
.composer > .mic { width: 22px; height: 29px; margin-left: 24px; }
```
